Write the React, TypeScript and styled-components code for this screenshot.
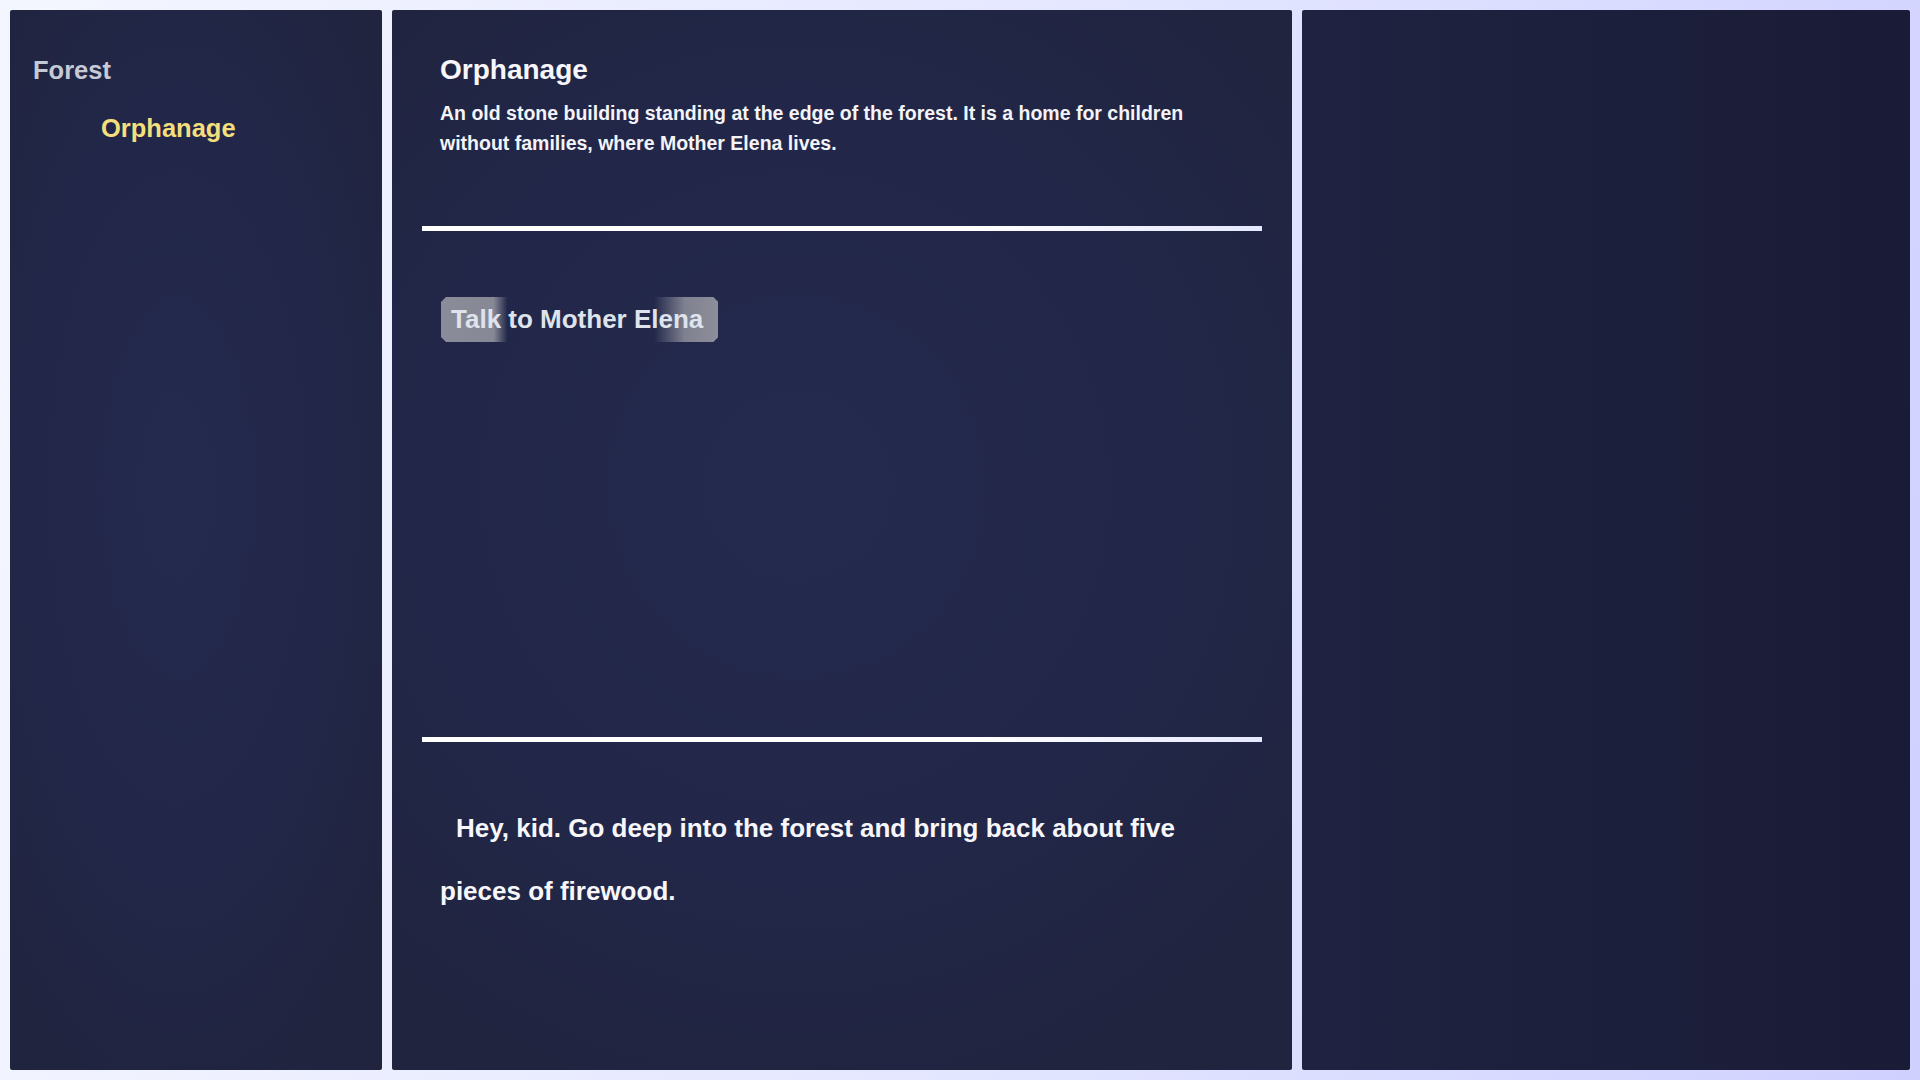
import styled, { createGlobalStyle } from "styled-components";

const GlobalStyle = createGlobalStyle`
  html, body {
    margin: 0;
    padding: 0;
    height: 100%;
  }
  body {
    background: linear-gradient(100deg, #f4f6ff 0%, #e3e6ff 55%, #d0d0ff 100%);
    font-family: "Liberation Sans", Arial, sans-serif;
    font-weight: 700;
    color: #ffffff;
  }
  #root {
    height: 100%;
  }
`;

const Screen = styled.main`
  box-sizing: border-box;
  height: 100vh;
  padding: 10px;
  display: grid;
  grid-template-columns: 372px 900px 1fr;
  gap: 10px;
`;

const Panel = styled.section<{ $tone?: "mid" | "dark" }>`
  border-radius: 2px;
  overflow: hidden;
  background: ${({ $tone }) =>
    $tone === "dark"
      ? "linear-gradient(90deg, #1f2341 0%, #1c1f3b 55%, #1a1b36 100%)"
      : "radial-gradient(ellipse 70% 60% at 45% 45%, #242a4e 0%, #222749 60%, #20243f 100%)"};
`;

/* ---------- map tree ---------- */

const NavList = styled.ul`
  list-style: none;
  margin: 0;
  padding: 44px 0 0 23px;
`;

const NavItem = styled.li<{ $depth?: number; $active?: boolean }>`
  margin: 0 0 26px ${({ $depth = 0 }) => $depth * 68}px;
  font-size: 25.5px;
  line-height: 32px;
  color: ${({ $active }) => ($active ? "#f3df7b" : "#c6cad6")};
`;

/* ---------- scene ---------- */

const Scene = styled(Panel)`
  display: grid;
  grid-template-rows: 216px 5px 1fr 5px 328px;
  padding: 0 30px;
`;

const SceneHeader = styled.header`
  padding: 43px 18px 0;
`;

const SceneTitle = styled.h1`
  margin: 0 0 11px;
  font-size: 28px;
  line-height: 34px;
  font-weight: 700;
  color: #f7f7fb;
`;

const SceneText = styled.p`
  margin: 0;
  font-size: 19.5px;
  line-height: 30px;
  color: #f4f4f8;
`;

const Divider = styled.hr`
  margin: 0;
  border: 0;
  height: 5px;
  background: linear-gradient(90deg, #ffffff 0%, #ffffff 65%, #e6e8ff 100%);
`;

const Actions = styled.div`
  padding: 66px 19px 0;
  display: flex;
  align-items: flex-start;
  gap: 16px;
`;

const ActionButton = styled.button`
  height: 45px;
  padding: 0 15px 0 10px;
  border: 0;
  font-family: inherit;
  font-weight: 700;
  font-size: 26px;
  line-height: 45px;
  color: #dfe3ec;
  cursor: pointer;
  background: linear-gradient(
    90deg,
    #8a8c99 0%,
    #868895 19%,
    rgba(134, 136, 149, 0) 24%,
    rgba(134, 136, 149, 0) 77%,
    #7f8190 88%,
    #8c8e9b 100%
  );
  clip-path: polygon(
    5px 0,
    calc(100% - 5px) 0,
    100% 5px,
    100% calc(100% - 5px),
    calc(100% - 5px) 100%,
    5px 100%,
    0 calc(100% - 5px),
    0 5px
  );
`;

const Dialogue = styled.div`
  padding: 55px 48px 0 18px;
`;

const DialogueText = styled.p`
  margin: 0;
  font-size: 26px;
  line-height: 63px;
  text-indent: 16px;
  color: #f7f7fb;
`;

export default function App() {
  return (
    <>
      <GlobalStyle />
      <Screen>
        <Panel>
          <NavList>
            <NavItem>Forest</NavItem>
            <NavItem $depth={1} $active>
              Orphanage
            </NavItem>
          </NavList>
        </Panel>

        <Scene>
          <SceneHeader>
            <SceneTitle>Orphanage</SceneTitle>
            <SceneText>
              An old stone building standing at the edge of the forest. It is a
              home for children without families, where Mother Elena lives.
            </SceneText>
          </SceneHeader>
          <Divider />
          <Actions>
            <ActionButton>Talk to Mother Elena</ActionButton>
          </Actions>
          <Divider />
          <Dialogue>
            <DialogueText>
              Hey, kid. Go deep into the forest and bring back about five
              pieces of firewood.
            </DialogueText>
          </Dialogue>
        </Scene>

        <Panel $tone="dark" />
      </Screen>
    </>
  );
}
